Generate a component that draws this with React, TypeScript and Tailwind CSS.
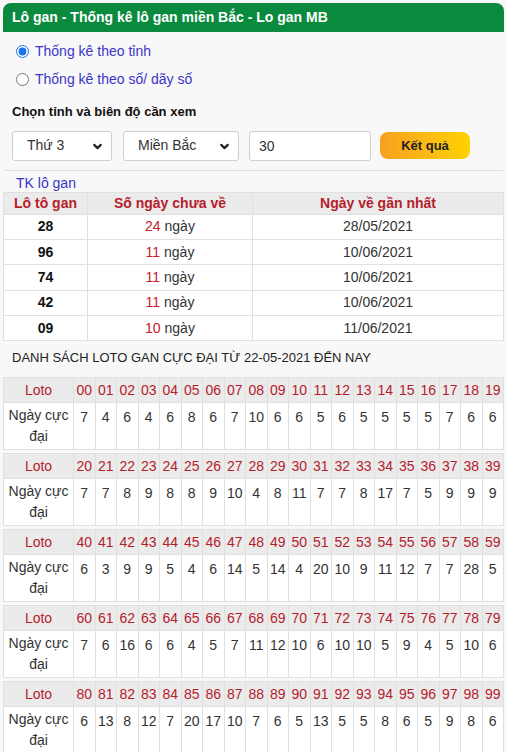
import { ChevronDown } from 'lucide-react'

const GAN_ROWS = [
  { lo: '28', days: '24', last: '28/05/2021' },
  { lo: '96', days: '11', last: '10/06/2021' },
  { lo: '74', days: '11', last: '10/06/2021' },
  { lo: '42', days: '11', last: '10/06/2021' },
  { lo: '09', days: '10', last: '11/06/2021' },
]

const MAX_DAYS: number[][] = [
  [7, 4, 6, 4, 6, 8, 6, 7, 10, 6, 6, 5, 6, 5, 5, 5, 5, 7, 6, 6],
  [7, 7, 8, 9, 8, 8, 9, 10, 4, 8, 11, 7, 7, 8, 17, 7, 5, 9, 9, 9],
  [6, 3, 9, 9, 5, 4, 6, 14, 5, 14, 4, 20, 10, 9, 11, 12, 7, 7, 28, 5],
  [7, 6, 16, 6, 6, 4, 5, 7, 11, 12, 10, 6, 10, 10, 5, 9, 4, 5, 10, 6],
  [6, 13, 8, 12, 7, 20, 17, 10, 7, 6, 5, 13, 5, 5, 8, 6, 5, 9, 8, 6],
]

function Select({ value, width }: { value: string; width: string }) {
  return (
    <div className={`relative ${width}`}>
      <select
        defaultValue={value}
        className="appearance-none w-full h-[30px] bg-white border border-[#cfcfcf] rounded-[3px] pl-[14px] text-[14px] text-[#333] outline-none"
      >
        <option>{value}</option>
      </select>
      <ChevronDown size={13} strokeWidth={4} className="absolute right-[8px] top-[9px] text-[#222] pointer-events-none" />
    </div>
  )
}

function MaxTable({ start, values }: { start: number; values: number[] }) {
  return (
    <table className="w-full table-fixed border-collapse bg-white text-[14px] text-[#333]">
      <colgroup>
        <col className="w-[70px]" />
        {values.map((_, i) => <col key={i} />)}
      </colgroup>
      <tbody>
        <tr className="h-[25px] bg-[#ebebeb]">
          <td className="border border-[#e0e0e0] text-center text-[#b5212b]">Loto</td>
          {values.map((_, i) => (
            <td key={i} className="border border-[#e0e0e0] text-center text-[#b5212b] px-0">
              {String(start + i).padStart(2, '0')}
            </td>
          ))}
        </tr>
        <tr className="h-[47px]">
          <td className="border border-[#e0e0e0] text-center leading-[21px] align-middle">Ngày cực đại</td>
          {values.map((v, i) => (
            <td key={i} className="border border-[#e0e0e0] text-center align-top pt-[4px] px-0">{v}</td>
          ))}
        </tr>
      </tbody>
    </table>
  )
}

export default function App() {
  return (
    <div className="min-h-[752px] bg-[#f8f8f8] px-[3px] pt-[3px] pb-[4px] font-['Liberation_Sans',Arial,sans-serif]">
      <div className="h-[29px] bg-[#0a8a3e] rounded-t-[8px] flex items-center px-[9px]">
        <h1 className="text-white font-bold text-[14px]">Lô gan - Thống kê lô gan miền Bắc - Lo gan MB</h1>
      </div>

      <div className="pl-[13px] pt-[10px] flex flex-col gap-[9px] text-[14px] text-[#3b34c8]">
        <label className="flex items-center gap-[6px] h-[19px]">
          <input type="radio" name="mode" defaultChecked className="w-[13px] h-[13px] accent-[#1a73e8]" />
          Thống kê theo tỉnh
        </label>
        <label className="flex items-center gap-[6px] h-[19px]">
          <input type="radio" name="mode" className="w-[13px] h-[13px]" />
          Thống kê theo số/ dãy số
        </label>
      </div>

      <p className="pl-[9px] mt-[13px] text-[13px] font-bold text-[#111]">Chọn tỉnh và biên độ cần xem</p>

      <div className="flex items-center pl-[9px] mt-[9px]">
        <Select value="Thứ 3" width="w-[100px]" />
        <div className="w-[11px]" />
        <Select value="Miền Bắc" width="w-[116px]" />
        <input
          defaultValue="30"
          className="ml-[10px] w-[122px] h-[30px] bg-white border border-[#cfcfcf] rounded-[3px] pl-[9px] text-[14px] text-[#333] outline-none"
        />
        <button className="ml-[9px] w-[90px] h-[27px] rounded-[8px] bg-gradient-to-r from-[#f7a01e] to-[#ffd200] text-[13px] font-bold text-[#222]">
          Kết quả
        </button>
      </div>

      <div className="mt-[9px] border-t border-[#dedede] mx-[1px]" />

      <p className="pl-[13px] pt-[3px] text-[14px] text-[#3b34c8] leading-[18px]">TK lô gan</p>

      <table className="w-full table-fixed border-collapse bg-white text-[14px] text-[#333]">
        <colgroup>
          <col className="w-[84px]" />
          <col className="w-[165px]" />
          <col />
        </colgroup>
        <thead>
          <tr className="h-[22px] bg-[#ebebeb] text-[#b5212b] font-bold leading-[19px]">
            <th className="border border-[#e0e0e0]">Lô tô gan</th>
            <th className="border border-[#e0e0e0]">Số ngày chưa về</th>
            <th className="border border-[#e0e0e0]">Ngày về gần nhất</th>
          </tr>
        </thead>
        <tbody>
          {GAN_ROWS.map((r) => (
            <tr key={r.lo} className="h-[25.4px]">
              <td className="border border-[#e0e0e0] text-center font-bold text-[#111]">{r.lo}</td>
              <td className="border border-[#e0e0e0] text-center">
                <span className="text-[#c8202a]">{r.days}</span> ngày
              </td>
              <td className="border border-[#e0e0e0] text-center">{r.last}</td>
            </tr>
          ))}
        </tbody>
      </table>

      <p className="pl-[9px] pt-[9px] pb-[11px] text-[13px] text-[#222] uppercase leading-[16px]">
        Danh sách loto gan cực đại từ 22-05-2021 đến nay
      </p>

      <div className="flex flex-col gap-[3px]">
        {MAX_DAYS.map((vals, i) => (
          <MaxTable key={i} start={i * 20} values={vals} />
        ))}
      </div>
    </div>
  )
}
